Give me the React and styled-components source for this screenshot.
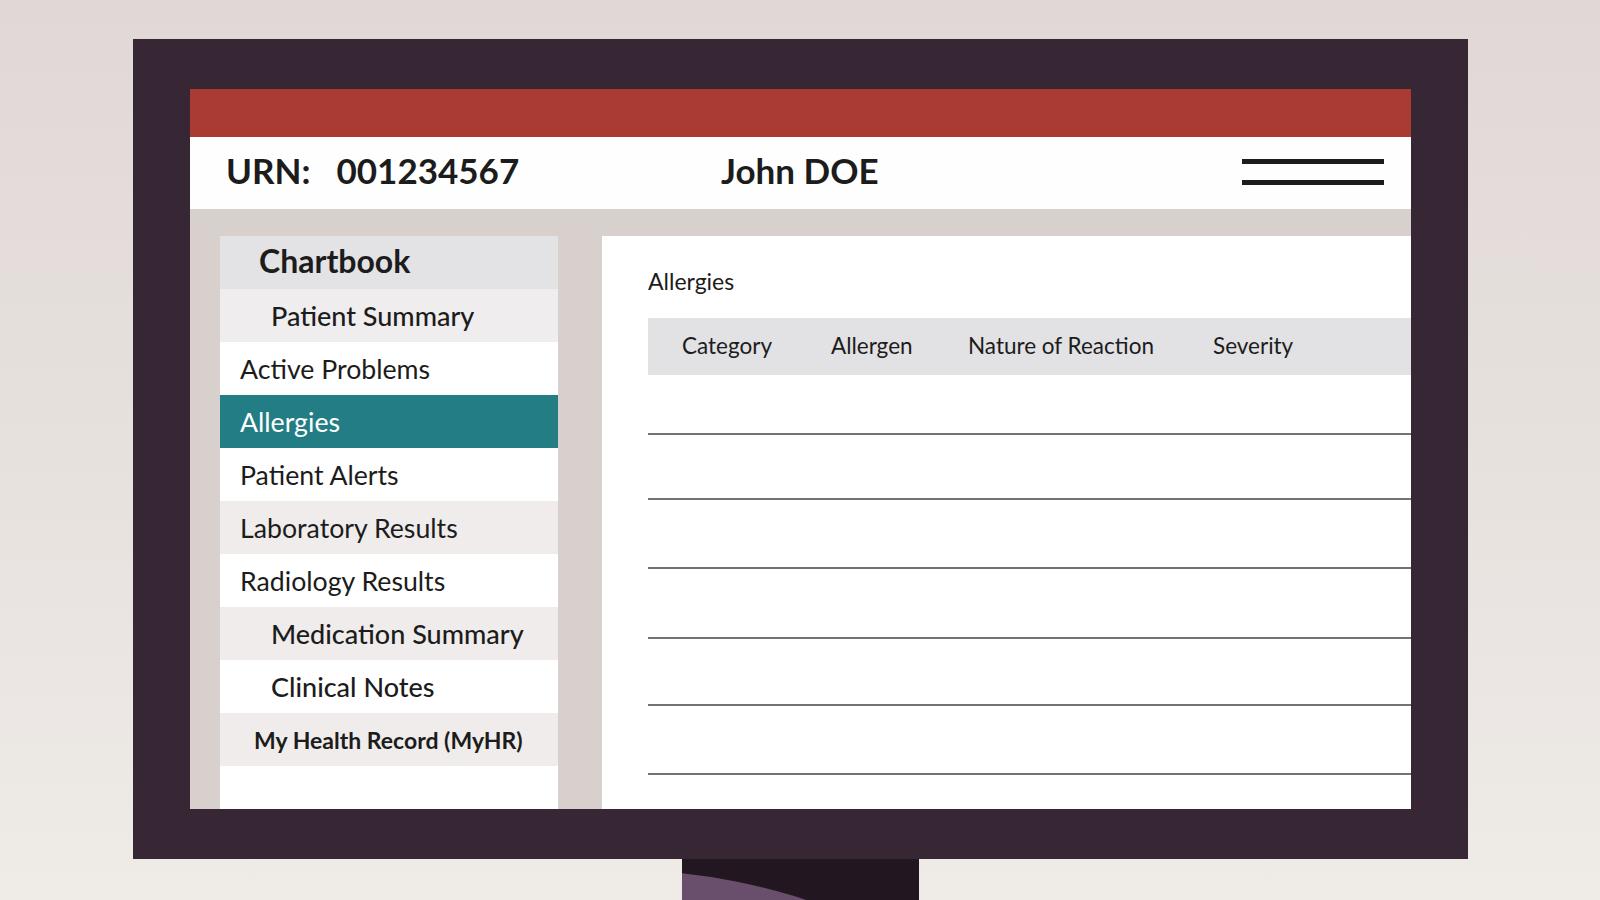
import React from "react";
import styled, { createGlobalStyle } from "styled-components";

// ============ GLOBAL ============

const GlobalStyle = createGlobalStyle`
  html, body {
    margin: 0;
    padding: 0;
  }
  body {
    width: 1600px;
    height: 900px;
    overflow: hidden;
    font-family: Lato, "Open Sans", "Liberation Sans", sans-serif;
    background: linear-gradient(180deg, #e0d8d6 0%, #e6e0dd 45%, #efebe7 100%);
    color: #1c1c1c;
  }
`;

// ============ LAYOUT ============

const Stage = styled.div`
  display: flex;
  flex-direction: column;
  align-items: flex-start;
  padding: 39px 0 0 133px;
`;

const Monitor = styled.div`
  width: 1335px;
  height: 820px;
  box-sizing: border-box;
  padding: 50px 57px 50px 57px;
  background: #372634;
`;

const Screen = styled.div`
  width: 1221px;
  height: 720px;
  display: flex;
  flex-direction: column;
  background: #d8d0cd;
`;

const RedBar = styled.div`
  height: 48px;
  background: #a93b33;
`;

const Header = styled.div`
  height: 72px;
  display: flex;
  align-items: center;
  background: #fefefe;
  padding-left: 36px;
  padding-right: 27px;
`;

const UrnGroup = styled.div`
  width: 495px;
  display: flex;
  gap: 26px;
  font-size: 35px;
  font-weight: 700;
  padding-bottom: 6px;
`;

const PatientName = styled.div`
  flex: 1;
  font-size: 35px;
  font-weight: 700;
  padding-bottom: 6px;
`;

const Hamburger = styled.div`
  width: 142px;
  display: flex;
  flex-direction: column;
  gap: 16px;
  margin-top: -2px;
`;

const HamburgerBar = styled.div`
  height: 5px;
  background: #1c1c1c;
`;

const Body = styled.div`
  flex: 1;
  display: flex;
  gap: 44px;
  padding: 27px 0 0 30px;
`;

// ============ SIDEBAR ============

const Sidebar = styled.div`
  width: 338px;
  display: flex;
  flex-direction: column;
  background: #ffffff;
`;

const SideTitle = styled.div`
  height: 53px;
  box-sizing: border-box;
  display: flex;
  align-items: center;
  padding: 0 0 4px 39px;
  background: #e3e2e4;
  font-size: 32px;
  font-weight: 700;
`;

const SideRow = styled.div`
  height: 53px;
  display: flex;
  align-items: center;
  padding-left: ${(p) => p.$indent}px;
  background: ${(p) => p.$bg};
  color: ${(p) => (p.$active ? "#ffffff" : "#1c1c1c")};
  font-size: ${(p) => p.$size}px;
  font-weight: ${(p) => p.$weight};
  white-space: nowrap;
`;

// ============ CONTENT ============

const Content = styled.div`
  flex: 1;
  display: flex;
  flex-direction: column;
  background: #ffffff;
  padding-left: 46px;
`;

const ContentTitle = styled.div`
  margin-top: 30px;
  height: 30px;
  line-height: 30px;
  font-size: 23px;
`;

const TableHead = styled.div`
  margin-top: 22px;
  height: 57px;
  display: grid;
  grid-template-columns: 149px 137px 245px 1fr;
  align-items: center;
  padding: 0 0 2px 34px;
  box-sizing: border-box;
  background: #e2e1e3;
  font-size: 22.5px;
`;

const TableRow = styled.div`
  height: ${(p) => p.$h}px;
  box-sizing: border-box;
  border-bottom: 2px solid #727272;
`;

const Stand = styled.svg`
  display: block;
  margin-left: 549px;
`;

// ============ DATA ============

const navItems = [
  { label: "Patient Summary", indent: 51, size: 27, weight: 500, bg: "#efeded" },
  { label: "Active Problems", indent: 20, size: 26.7, weight: 400, bg: "#ffffff" },
  { label: "Allergies", indent: 20, size: 26.7, weight: 400, bg: "#237d85", active: true },
  { label: "Patient Alerts", indent: 20, size: 26.7, weight: 400, bg: "#ffffff" },
  { label: "Laboratory Results", indent: 20, size: 26.7, weight: 400, bg: "#efeceb" },
  { label: "Radiology Results", indent: 20, size: 26.7, weight: 400, bg: "#ffffff" },
  { label: "Medication Summary", indent: 51, size: 27, weight: 500, bg: "#efeceb" },
  { label: "Clinical Notes", indent: 51, size: 27, weight: 500, bg: "#ffffff" },
  { label: "My Health Record (MyHR)", indent: 34, size: 23, weight: 700, bg: "#efeceb" },
];

const rowHeights = [60, 65, 69, 70, 67, 69];

const columns = ["Category", "Allergen", "Nature of Reaction", "Severity"];

// ============ COMPONENT ============

export default function App() {
  return (
    <>
      <GlobalStyle />
      <Stage>
        <Monitor>
          <Screen>
            <RedBar />
            <Header>
              <UrnGroup>
                <span>URN:</span>
                <span>001234567</span>
              </UrnGroup>
              <PatientName>John DOE</PatientName>
              <Hamburger>
                <HamburgerBar />
                <HamburgerBar />
              </Hamburger>
            </Header>
            <Body>
              <Sidebar>
                <SideTitle>Chartbook</SideTitle>
                {navItems.map((item) => (
                  <SideRow
                    key={item.label}
                    $indent={item.indent}
                    $size={item.size}
                    $weight={item.weight}
                    $bg={item.bg}
                    $active={item.active}
                  >
                    {item.label}
                  </SideRow>
                ))}
              </Sidebar>
              <Content>
                <ContentTitle>Allergies</ContentTitle>
                <TableHead>
                  {columns.map((c) => (
                    <span key={c}>{c}</span>
                  ))}
                </TableHead>
                {rowHeights.map((h, i) => (
                  <TableRow key={i} $h={h} />
                ))}
              </Content>
            </Body>
          </Screen>
        </Monitor>
        <Stand width="237" height="41" viewBox="0 0 237 41">
          <rect x="0" y="0" width="237" height="41" fill="#221720" />
          <circle cx="-62" cy="605" r="594" fill="#6a4f6c" />
        </Stand>
      </Stage>
    </>
  );
}
